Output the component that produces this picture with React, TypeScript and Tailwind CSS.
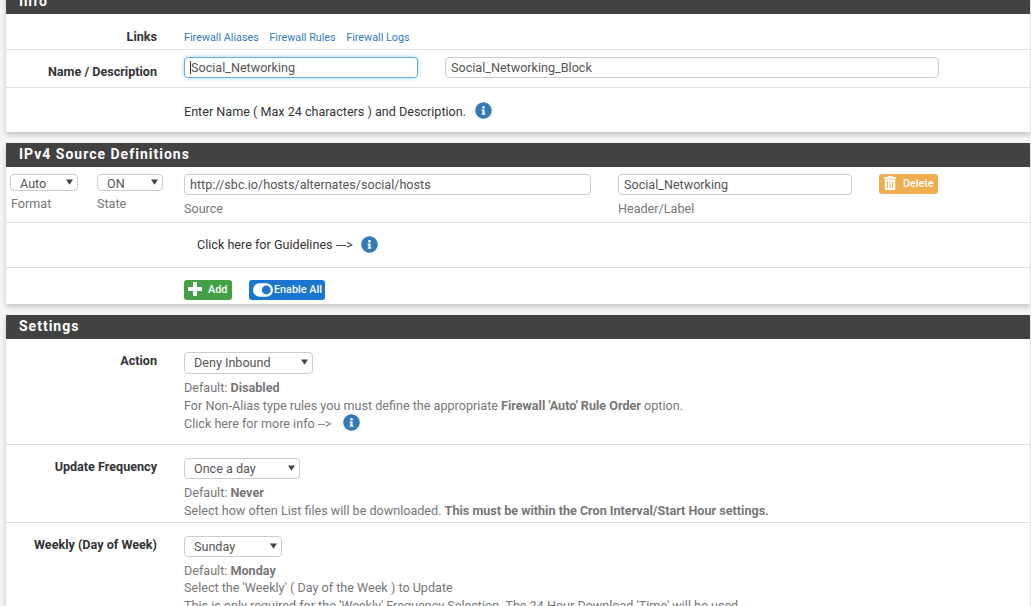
import type { ReactNode } from "react";
import { FaInfoCircle, FaToggleOn, FaTrashAlt } from "react-icons/fa";

function Panel({ title, children }: { title: string; children: ReactNode }) {
  return (
    <section className="mb-[11px] bg-white shadow-[0_3px_5px_rgba(0,0,0,0.2)]">
      <h2 className="h-[24px] bg-[#424242] pl-[13px] text-[14px] font-bold leading-[23px] tracking-[1px] text-white">
        {title}
      </h2>
      {children}
    </section>
  );
}

function Row({
  label,
  height,
  labelTop,
  last,
  children,
}: {
  label?: string;
  height: string;
  labelTop?: string;
  last?: boolean;
  children: ReactNode;
}) {
  return (
    <div className={`flex ${height} ${last ? "" : "border-b border-[#e0e0e0]"}`}>
      <div className={`w-[151px] shrink-0 text-right text-[12.6px] font-bold leading-[18px] text-[#333] ${labelTop ?? ""}`}>
        {label}
      </div>
      <div className="ml-[27px] min-w-0 flex-1">{children}</div>
    </div>
  );
}

function Select({ value, width, height = "h-[21px]", arrowTop = "top-[7px]" }: { value: string; width: string; height?: string; arrowTop?: string }) {
  return (
    <div className={`relative ${width}`}>
      <select
        defaultValue={value}
        className={`block w-full appearance-none rounded-[4px] border border-[#ccc] bg-white pl-[9px] text-[12.6px] text-[#555] outline-none ${height}`}
      >
        <option>{value}</option>
      </select>
      <svg
        viewBox="0 0 8 6"
        className={`pointer-events-none absolute right-[5px] h-[6px] w-[7px] fill-[#444] ${arrowTop}`}
      >
        <path d="M0 0h8L4 6z" />
      </svg>
    </div>
  );
}

function TextInput({ value, width }: { value: string; width: string }) {
  return (
    <input
      defaultValue={value}
      className={`block h-[21px] ${width} rounded-[4px] border border-[#ccc] bg-white px-[5px] text-[12.6px] text-[#555] outline-none`}
    />
  );
}

function Info({ lift = "-translate-y-px" }: { lift?: string }) {
  return <FaInfoCircle className={`text-[17px] text-[#337ab7] ${lift}`} />;
}

export default function App() {
  return (
    <div className="h-[606px] overflow-hidden bg-[#f5f5f5] pl-[6px] font-['Roboto',sans-serif]">
      <div className="-mt-[10px] w-[1024px]">
        <Panel title="Info">
          <Row label="Links" height="h-[36px]" labelTop="pt-[14px]">
            <div className="flex gap-[10.5px] pt-[17px] text-[10.8px] leading-[13px] text-[#337ab7]">
              <a>Firewall Aliases</a>
              <a>Firewall Rules</a>
              <a>Firewall Logs</a>
            </div>
          </Row>
          <Row label="Name / Description" height="h-[38px]" labelTop="pt-[13px]">
            <div className="flex gap-[27px] pt-[7px]">
              <div className="relative">
                <input
                  defaultValue="Social_Networking"
                  className="block h-[21px] w-[234px] rounded-[4px] border border-[#66afe9] bg-white px-[6px] text-[12.6px] text-[#555] shadow-[0_0_4px_rgba(102,175,233,0.6)] outline-none"
                />
                <span className="absolute left-[6px] top-[4px] h-[13px] w-px bg-[#333]" />
              </div>
              <TextInput value="Social_Networking_Block" width="w-[494px]" />
            </div>
          </Row>
          <Row height="h-[44px]" last>
            <div className="flex items-center gap-[9px] pt-[14px] text-[12.6px] leading-[18px] text-[#333]">
              <span className="translate-y-[1px]">Enter Name ( Max 24 characters ) and Description.</span>
              <Info />
            </div>
          </Row>
        </Panel>

        <Panel title="IPv4 Source Definitions">
          <div className="flex h-[56px] border-b border-[#e0e0e0] pl-[4px] pt-[7px] text-[12.6px] leading-[17px] text-[#777]">
            <div className="w-[87px]">
              <Select value="Auto" width="w-[68px]" height="h-[17px]" arrowTop="top-[5px]" />
              <div className="mt-[4px] pl-[1px]">Format</div>
            </div>
            <div className="w-[87px]">
              <Select value="ON" width="w-[66px]" height="h-[17px]" arrowTop="top-[5px]" />
              <div className="mt-[4px]">State</div>
            </div>
            <div className="w-[434px]">
              <TextInput value="http://sbc.io/hosts/alternates/social/hosts" width="w-[407px]" />
              <div className="mt-[5px]">Source</div>
            </div>
            <div className="w-[261px]">
              <TextInput value="Social_Networking" width="w-[234px]" />
              <div className="mt-[5px]">Header/Label</div>
            </div>
            <button className="flex h-[20px] w-[59px] items-center rounded-[3px] bg-[#f0ad4e] pl-[4px] text-[10.8px] font-medium text-white">
              <FaTrashAlt className="-translate-y-px text-[14px]" />
              <span className="ml-[6px] -translate-y-px">Delete</span>
            </button>
          </div>
          <Row height="h-[45px]">
            <div className="flex items-center gap-[8px] pl-[13px] pt-[13px] text-[12.6px] leading-[18px] text-[#333]">
              <span>{"Click here for Guidelines --->"}</span>
              <Info />
            </div>
          </Row>
          <Row height="h-[36px]" last>
            <div className="flex gap-[17px] pt-[12px]">
              <button className="flex h-[20px] w-[48px] items-center rounded-[3px] bg-[#43a047] pl-[4px] text-[10.8px] font-medium text-white">
                <svg viewBox="0 0 14 14" className="h-[14px] w-[14px] -translate-y-px fill-white">
                  <path d="M5 0h4v5h5v4H9v5H5V9H0V5h5z" />
                </svg>
                <span className="ml-[6px]">Add</span>
              </button>
              <button className="flex h-[20px] w-[76px] items-center rounded-[3px] bg-[#1976d2] pl-[4px] text-[10.8px] font-medium text-white">
                <FaToggleOn className="text-[20px]" />
                <span className="ml-[1px]">Enable All</span>
              </button>
            </div>
          </Row>
        </Panel>

        <Panel title="Settings">
          <Row label="Action" height="h-[106px] pt-[13px]">
            <div className="text-[12.6px] leading-[18px] text-[#777]">
              <Select value="Deny Inbound" width="w-[129px]" height="h-[22px]" />
              <div className="mt-[5px]">
                Default: <b>Disabled</b>
              </div>
              <div>
                For Non-Alias type rules you must define the appropriate{" "}
                <b>Firewall 'Auto' Rule Order</b> option.
              </div>
              <div className="flex items-center gap-[12px]">
                <span>{"Click here for more info -->"}</span>
                <Info lift="-translate-y-[2px]" />
              </div>
            </div>
          </Row>
          <Row label="Update Frequency" height="h-[78px] pt-[13px]">
            <div className="text-[12.6px] leading-[18px] text-[#777]">
              <Select value="Once a day" width="w-[116px]" />
              <div className="mt-[5px]">
                Default: <b>Never</b>
              </div>
              <div>
                Select how often List files will be downloaded.{" "}
                <b>This must be within the Cron Interval/Start Hour settings.</b>
              </div>
            </div>
          </Row>
          <Row label="Weekly (Day of Week)" height="h-[100px] pt-[13px]" last>
            <div className="text-[12.6px] leading-[18px] text-[#777]">
              <Select value="Sunday" width="w-[98px]" />
              <div className="mt-[5px]">
                Default: <b>Monday</b>
              </div>
              <div className="-mt-px">Select the 'Weekly' ( Day of the Week ) to Update</div>
              <div>
                This is only required for the 'Weekly' Frequency Selection. The 24 Hour Download
                'Time' will be used.
              </div>
            </div>
          </Row>
        </Panel>
      </div>
    </div>
  );
}
